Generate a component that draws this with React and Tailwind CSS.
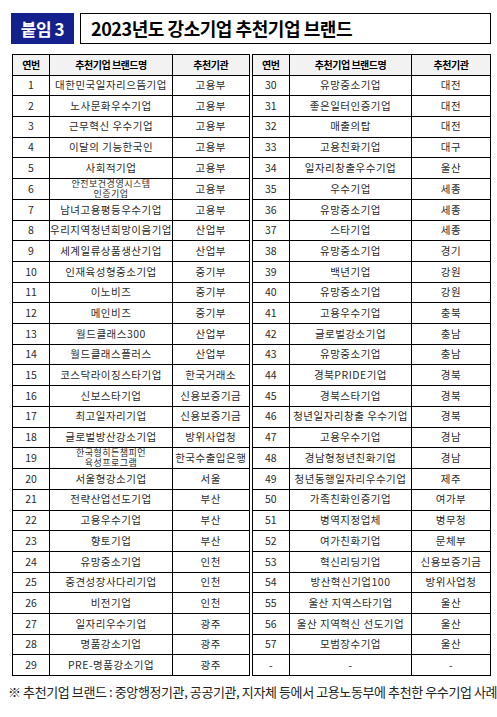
const left = [
  ["1", "대한민국일자리으뜸기업", "고용부"],
  ["2", "노사문화우수기업", "고용부"],
  ["3", "근무혁신 우수기업", "고용부"],
  ["4", "이달의 기능한국인", "고용부"],
  ["5", "사회적기업", "고용부"],
  ["6", "안전보건경영시스템\n인증기업", "고용부"],
  ["7", "남녀고용평등우수기업", "고용부"],
  ["8", "우리지역청년희망이음기업", "산업부"],
  ["9", "세계일류상품생산기업", "산업부"],
  ["10", "인재육성형중소기업", "중기부"],
  ["11", "이노비즈", "중기부"],
  ["12", "메인비즈", "중기부"],
  ["13", "월드클래스300", "산업부"],
  ["14", "월드클래스플러스", "산업부"],
  ["15", "코스닥라이징스타기업", "한국거래소"],
  ["16", "신보스타기업", "신용보증기금"],
  ["17", "최고일자리기업", "신용보증기금"],
  ["18", "글로벌방산강소기업", "방위사업청"],
  ["19", "한국형히든챔피언\n육성프로그램", "한국수출입은행"],
  ["20", "서울형강소기업", "서울"],
  ["21", "전략산업선도기업", "부산"],
  ["22", "고용우수기업", "부산"],
  ["23", "향토기업", "부산"],
  ["24", "유망중소기업", "인천"],
  ["25", "중견성장사다리기업", "인천"],
  ["26", "비전기업", "인천"],
  ["27", "일자리우수기업", "광주"],
  ["28", "명품강소기업", "광주"],
  ["29", "PRE-명품강소기업", "광주"],
];

const right = [
  ["30", "유망중소기업", "대전"],
  ["31", "좋은일터인증기업", "대전"],
  ["32", "매출의탑", "대전"],
  ["33", "고용친화기업", "대구"],
  ["34", "일자리창출우수기업", "울산"],
  ["35", "우수기업", "세종"],
  ["36", "유망중소기업", "세종"],
  ["37", "스타기업", "세종"],
  ["38", "유망중소기업", "경기"],
  ["39", "백년기업", "강원"],
  ["40", "유망중소기업", "강원"],
  ["41", "고용우수기업", "충북"],
  ["42", "글로벌강소기업", "충남"],
  ["43", "유망중소기업", "충남"],
  ["44", "경북PRIDE기업", "경북"],
  ["45", "경북스타기업", "경북"],
  ["46", "청년일자리창출 우수기업", "경북"],
  ["47", "고용우수기업", "경남"],
  ["48", "경남형청년친화기업", "경남"],
  ["49", "청년동행일자리우수기업", "제주"],
  ["50", "가족친화인증기업", "여가부"],
  ["51", "병역지정업체", "병무청"],
  ["52", "여가친화기업", "문체부"],
  ["53", "혁신리딩기업", "신용보증기금"],
  ["54", "방산혁신기업100", "방위사업청"],
  ["55", "울산 지역스타기업", "울산"],
  ["56", "울산 지역혁신 선도기업", "울산"],
  ["57", "모범장수기업", "울산"],
  ["-", "-", "-"],
];

const cell = "border border-black text-center align-middle p-0";
const mid = " border-l-[4px] border-l-black border-double";

function Name({ text }) {
  const lines = text.split("\n");
  if (lines.length === 1) return text;
  return (
    <div className="text-[9px] leading-[10px]">
      {lines.map((l) => (
        <div key={l}>{l}</div>
      ))}
    </div>
  );
}

export default function App() {
  return (
    <div
      className="w-[497px] h-[717px] bg-white text-[#2a2a2a]"
      style={{ fontFamily: '"Noto Sans CJK KR", "Noto Sans", sans-serif' }}
    >
      {/* title */}
      <div className="flex gap-[6px] pt-[13px] pl-[11px]">
        <div className="w-[63px] h-[31px] bg-[#14218c] text-white font-bold text-[17px] flex items-center justify-center tracking-tight">
          붙임 3
        </div>
        <div className="w-[411px] h-[31px] border border-black flex items-center pl-[10px] text-black font-bold text-[18px] tracking-tight">
          2023년도 강소기업 추천기업 브랜드
        </div>
      </div>

      {/* table */}
      <table className="ml-[12px] mt-[10px] w-[478px] border-collapse table-fixed text-[10.5px] leading-none">
        <colgroup>
          <col className="w-[37px]" />
          <col className="w-[123px]" />
          <col className="w-[78px]" />
          <col className="w-[39px]" />
          <col className="w-[122px]" />
          <col className="w-[79px]" />
        </colgroup>
        <thead>
          <tr className="h-[20.5px] bg-[#f2f2f2] font-bold text-[10px] text-black tracking-tighter">
            <th className={cell}>연번</th>
            <th className={cell}>추천기업 브랜드명</th>
            <th className={cell}>추천기관</th>
            <th className={cell + mid}>연번</th>
            <th className={cell}>추천기업 브랜드명</th>
            <th className={cell}>추천기관</th>
          </tr>
        </thead>
        <tbody>
          {left.map((l, i) => {
            const r = right[i];
            return (
              <tr key={l[0]} className="h-[20.7px]">
                <td className={cell}>{l[0]}</td>
                <td className={cell + " tracking-[0.5px]"}>
                  <Name text={l[1]} />
                </td>
                <td className={cell + " tracking-[0.5px]"}>{l[2]}</td>
                <td className={cell + mid}>{r[0]}</td>
                <td className={cell + " tracking-[0.5px]"}>
                  <Name text={r[1]} />
                </td>
                <td className={cell + " tracking-[0.5px]"}>{r[2]}</td>
              </tr>
            );
          })}
        </tbody>
      </table>

      {/* footnote */}
      <p className="pl-[8px] mt-[6px] text-[13px] text-[#222] tracking-[-0.4px] whitespace-nowrap">
        ※ 추천기업 브랜드 : 중앙행정기관, 공공기관, 지자체 등에서 고용노동부에 추천한 우수기업 사례
      </p>
    </div>
  );
}
